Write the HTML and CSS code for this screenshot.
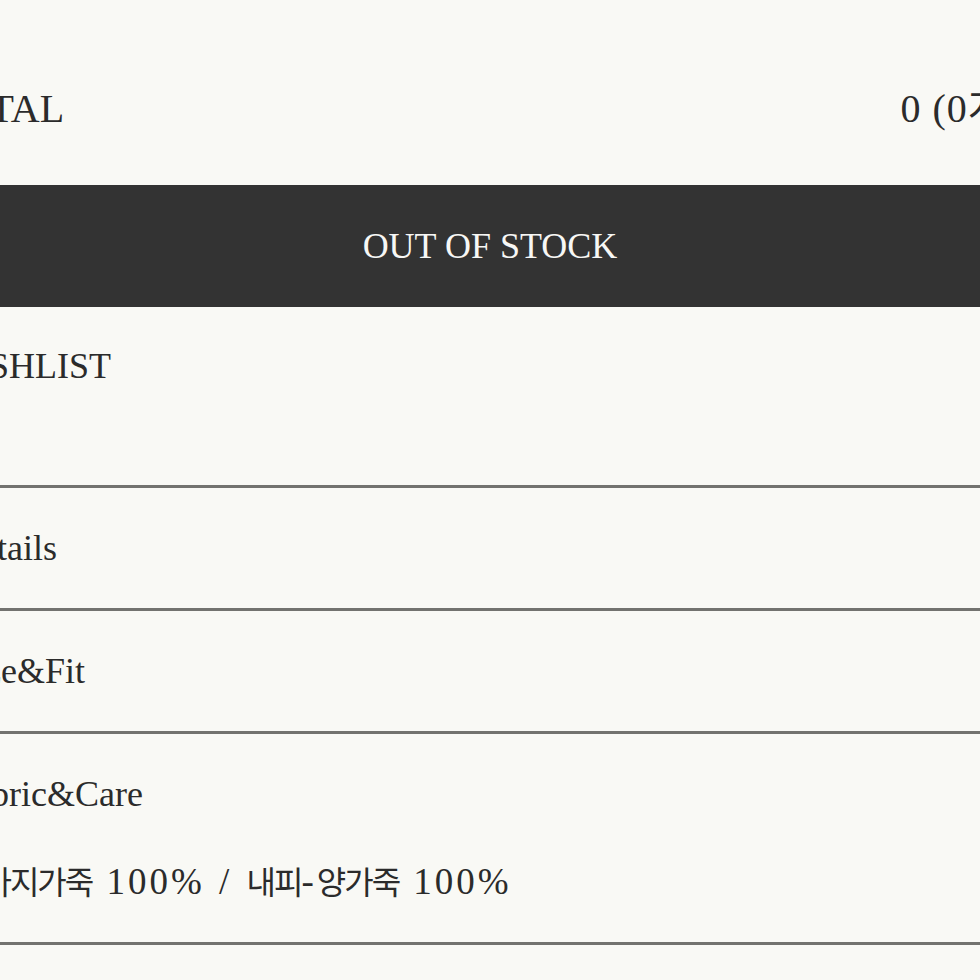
FILE: index.html
```html
<!DOCTYPE html>
<html lang="ko">
<head>
<meta charset="utf-8">
<title>Product</title>
<link rel="stylesheet" href="styles.css">
</head>
<body>
<div class="page">
  <div class="total">
    <span class="total-label">TOTAL</span>
    <span class="total-price">0 (0개)</span>
  </div>
  <button class="soldout" type="button">OUT OF STOCK</button>
  <div class="wishlist">WISHLIST</div>
  <section class="info">
    <div class="info-row"><h3 class="info-title">Details</h3></div>
    <div class="info-row"><h3 class="info-title">Size&amp;Fit</h3></div>
    <div class="info-row">
      <h3 class="info-title">Fabric&amp;Care</h3>
      <p class="info-text"><span class="ko">송아지가죽</span> 100% / <span class="ko">내피</span>-<span class="ko">양가죽</span> 100%</p>
    </div>
  </section>
</div>
</body>
</html>
```

FILE: styles.css
```css
html, body {
  margin: 0;
  padding: 0;
  background: #f9f9f5;
  overflow: hidden;
}
body {
  width: 980px;
  height: 980px;
  font-family: "Liberation Serif", "Noto Sans CJK KR", serif;
  color: #2b2b2b;
}
.page {
  margin: 0 -45px;
  width: 1070px;
}
.total {
  display: flex;
  justify-content: space-between;
  font-size: 40px;
  line-height: 48px;
  padding: 85px 5px 52px 0;
}
.total-label {
  margin-left: -18px;
}
.total-price {
  letter-spacing: 1px;
}
.soldout {
  display: flex;
  align-items: center;
  justify-content: center;
  width: 100%;
  height: 122px;
  border: 0;
  margin: 0;
  padding: 0;
  background: #333333;
  color: #f7f7f5;
  font-family: "Liberation Serif", serif;
  font-size: 36px;
  line-height: 44px;
}
.wishlist {
  font-size: 36px;
  line-height: 44px;
  padding: 37px 0 97px;
  text-indent: -12px;
}
.info-row {
  border-top: 3px solid #73736f;
  padding: 38px 0 38px;
}
.info-row:last-child {
  border-bottom: 3px solid #73736f;
  padding-bottom: 38px;
}
.info-title {
  margin: 0;
  font-weight: normal;
  font-size: 36px;
  line-height: 44px;
}
.info-text {
  margin: 42px 0 0;
  font-size: 37px;
  line-height: 44px;
  letter-spacing: 3px;
  word-spacing: 2px;
}
.ko {
  font-family: "Noto Sans CJK KR", sans-serif;
  font-size: 32px;
  font-weight: 400;
  letter-spacing: -2px;
}
```
